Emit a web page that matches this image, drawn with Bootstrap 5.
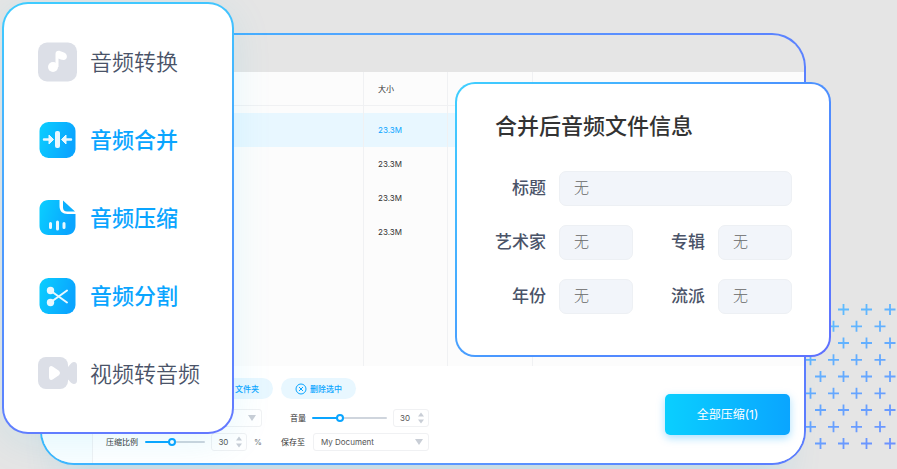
<!DOCTYPE html>
<html lang="zh-CN">
<head>
<meta charset="utf-8">
<meta name="viewport" content="width=device-width, initial-scale=1">
<title>音频压缩</title>
<link href="https://cdn.jsdelivr.net/npm/bootstrap@5.3.0/dist/css/bootstrap.min.css" rel="stylesheet">
<style>
  :root { --accent: #0aa5ff; --ink: #4a5368; --line: #f0f1f3; --page: #e5e5e5; }
  body { background: var(--page); font-family: Inter, "Noto Sans CJK SC", sans-serif; color: #333; }
  .scene { min-height: 100vh; padding: 33px 91px 4px 40px; overflow: hidden; }
  .outlined { border: 2px solid transparent; }

  .pluses { right: 0; bottom: 18px; width: 98px; height: 148px; }

  .app-window { border-radius: 34px; overflow: hidden;
    background: linear-gradient(var(--page), var(--page)) padding-box, linear-gradient(100deg, #35c0ff, #5a9bff 50%, #5b7cff) border-box; }
  .app-glow { box-shadow: 0 40px 40px -24px rgba(0, 170, 230, .16); }
  .title-bar { height: 37px; }
  .side-rail { width: 51px; border-right: 1px solid var(--line); background: #fafeff; }

  .files { background: #fcfcfc; font-size: 8px; line-height: 12px; table-layout: fixed; border-collapse: separate; border-spacing: 0; }
  .files th, .files td { height: 34px; padding: 0 14px; font-weight: 400; border-right: 1px solid var(--line); }
  .files td { padding-bottom: 1px; }
  .files th { border-bottom: 1px solid var(--line); }
  .files th:last-child, .files td:last-child { border-right: 0; }
  .files .spacer td { height: 7px; }
  .files .rest td { height: auto; }
  .files .chosen td { background: #e8f7ff; color: var(--accent); }
  .c-name { width: 271px; } .c-size { width: 84px; } .c-time { width: 85px; }

  .tool-bar { background: #fff; padding: 12px 14px 12px 13px; font-size: 8px; line-height: 12px; }
  .col-a { width: 167px; } .col-b { width: 148px; }
  .inset-end { padding-right: 11px; }
  .line-one { margin: 10px 0 6px; }
  .pill { height: 21px; gap: 3px; padding: 0 14px; border: 0; border-radius: 11px; background: #e8f7ff; color: var(--accent); font-weight: 500; }
  .lab { color: #333; white-space: nowrap; }
  .field-box { height: 18px; border: 1px solid var(--line); border-radius: 3px; background: transparent; color: #555; font-size: 8px; line-height: 12px; }
  .num { width: 36px; }
  .num input { width: 24px; padding: 0 0 0 6px; border: 0; background: transparent; color: #555; appearance: textfield; -moz-appearance: textfield; }
  .num input::-webkit-inner-spin-button { display: none; }
  .pick { appearance: none; padding: 0 20px 0 7px; width: 100%; }
  .pick-wrap svg { right: 6px; top: 6px; }
  .slide { appearance: none; height: 8px; margin: 0; background: transparent; min-width: 0; }
  .slide-vol { margin: 0 6px; }
  .slide::-webkit-slider-runnable-track { height: 2px; border-radius: 1px; background: linear-gradient(90deg, var(--accent) var(--at), #cfd5dd var(--at)); }
  .slide::-webkit-slider-thumb { appearance: none; width: 8px; height: 8px; margin-top: -3px; border: 2px solid var(--accent); border-radius: 50%; background: #fff; }
  .go { height: 41px; width: 125px; border: 0; border-radius: 5px; font-size: 12px; color: #fff; margin-top: 16px;
    background: linear-gradient(90deg, #0acfff, #0aa5ff); box-shadow: 0 3px 8px rgba(10, 165, 255, .35); }

  .menu-card { left: 2px; top: 2px; width: 232px; padding: 36px 34px; border-radius: 26px;
    background: linear-gradient(#fff, #fff) padding-box, linear-gradient(170deg, #3fcdff, #4a9cff 50%, #6478ff) border-box;
    box-shadow: 0 8px 40px rgba(0, 190, 240, .1); }
  .menu-list { gap: 34px; }
  .menu-link { height: 44px; gap: 12px; font-size: 22px; line-height: 32px; color: var(--ink); text-decoration: none; white-space: nowrap; font-weight: 350; }
  .menu-link.on { color: var(--accent); font-weight: 500; }
  .menu-link svg { width: 40px; height: 44px; flex: none; }

  .info-card { right: 66px; top: 82px; width: 376px; padding: 26px 37px 41px 38px; border-radius: 20px;
    background: linear-gradient(#fff, #fff) padding-box, linear-gradient(135deg, #3fd0ff, #4a96ff 50%, #6070ff) border-box; }
  .info-card h1 { font-size: 22px; line-height: 32px; font-weight: 500; margin: 0 0 29px; }
  .info-grid { display: grid; grid-template-columns: 51px 1fr 59px 1fr; column-gap: 13px; row-gap: 19px; }
  .info-grid label { font-size: 17px; line-height: 35px; font-weight: 500; color: var(--ink); text-align: right; white-space: nowrap; }
  .info-grid input { height: 35px; min-width: 0; padding: 0 14px 2px; border: 1px solid #edf0f4; border-radius: 7px; background: #f2f5fa; font-size: 15px; font-weight: 300; }
  .info-grid input::placeholder { color: #666; opacity: 1; }
  .wide { grid-column: 2 / -1; }
</style>
</head>
<body>
<div class="scene position-relative d-flex">
  <svg class="pluses position-absolute" viewBox="0 0 98 148" aria-hidden="true">
    <defs>
      <linearGradient id="pg" gradientUnits="userSpaceOnUse" x1="0" y1="0" x2="98" y2="148"><stop stop-color="#5cc4ff"/><stop offset="1" stop-color="#6d8fff"/></linearGradient>
    </defs>
    <path fill="none" stroke="url(#pg)" stroke-width="1.800" d="
      M39 6.500h11m-5.500-5.500v11M62 6.500h11m-5.500-5.500v11M85.500 6.500h11m-5.500-5.500v11
      M29 23.300h11m-5.500-5.500v11M52 23.300h11m-5.500-5.500v11M75.500 23.300h11m-5.500-5.500v11
      M39 40h11m-5.500-5.500v11M62 40h11m-5.500-5.500v11M85.500 40h11m-5.500-5.500v11
      M6 56.800h11m-5.500-5.500v11M29 56.800h11m-5.500-5.500v11M52 56.800h11m-5.500-5.500v11M75.500 56.800h11m-5.500-5.500v11
      M16 73.500h11m-5.500-5.500v11M39 73.500h11m-5.500-5.500v11M62 73.500h11m-5.500-5.500v11M85.500 73.500h11m-5.500-5.500v11
      M6 90.300h11m-5.500-5.500v11M29 90.300h11m-5.500-5.500v11M52 90.300h11m-5.500-5.500v11M75.500 90.300h11m-5.500-5.500v11
      M16 107h11m-5.500-5.500v11M39 107h11m-5.500-5.500v11M62 107h11m-5.500-5.500v11M85.500 107h11m-5.500-5.500v11
      M6 123.800h11m-5.500-5.500v11M29 123.800h11m-5.500-5.500v11M52 123.800h11m-5.500-5.500v11M75.500 123.800h11m-5.500-5.500v11
      M16 140.500h11m-5.500-5.500v11M39 140.500h11m-5.500-5.500v11M62 140.500h11m-5.500-5.500v11M85.500 140.500h11m-5.500-5.500v11"/>
  </svg>

  <main class="app-window app-glow outlined position-relative flex-fill d-flex flex-column">
    <div class="title-bar"></div>
    <div class="d-flex flex-fill">
      <div class="side-rail flex-shrink-0"></div>
      <div class="flex-fill d-flex flex-column">
        <div class="flex-fill d-flex">
        <table class="files w-100">
          <colgroup><col class="c-name"><col class="c-size"><col class="c-time"><col></colgroup>
          <thead><tr><th></th><th scope="col">大小</th><th></th><th></th></tr></thead>
          <tbody>
            <tr class="spacer"><td></td><td></td><td></td><td></td></tr>
            <tr class="chosen"><td></td><td>23.3M</td><td></td><td></td></tr>
            <tr><td></td><td>23.3M</td><td></td><td></td></tr>
            <tr><td></td><td>23.3M</td><td></td><td></td></tr>
            <tr><td></td><td>23.3M</td><td></td><td></td></tr>
            <tr class="rest"><td></td><td></td><td></td><td></td></tr>
          </tbody>
        </table>
        </div>
        <div class="tool-bar d-flex justify-content-between align-items-start">
          <div class="d-flex gap-2">
            <div class="col-a d-flex flex-column">
              <button type="button" class="pill align-self-end d-flex align-items-center">
                <svg width="12" height="12" viewBox="0 0 12 12" fill="none" stroke="#0aa5ff" aria-hidden="true"><circle cx="6" cy="6" r="5"/><path d="M6 3.500v5M3.500 6h5"/></svg>文件夹
              </button>
              <div class="line-one inset-end d-flex justify-content-end">
                <div class="pick-wrap position-relative d-flex w-50">
                  <select class="field-box pick" aria-label="格式"><option></option></select>
                  <svg class="position-absolute" width="8" height="6" viewBox="0 0 8 6" aria-hidden="true"><path fill="#c9ced6" d="M0 0h8L4 6z"/></svg>
                </div>
              </div>
              <div class="inset-end d-flex align-items-center justify-content-between">
                <label class="lab" for="ratio">压缩比例</label>
                <input id="ratio" class="slide" type="range" value="45" style="width:60px;--at:45%">
                <span class="field-box num d-flex align-items-center">
                  <input type="number" value="30" aria-label="压缩比例数值">
                  <svg width="6" height="12" viewBox="0 0 6 12" aria-hidden="true"><path fill="#c9ced6" d="M0 4.500 3 .5l3 4zM0 7.500h6l-3 4z"/></svg>
                </span>
                <span class="text-secondary">%</span>
              </div>
            </div>
            <div class="col-b d-flex flex-column">
              <button type="button" class="pill align-self-start d-flex align-items-center">
                <svg width="12" height="12" viewBox="0 0 12 12" fill="none" stroke="#0aa5ff" aria-hidden="true"><circle cx="6" cy="6" r="5"/><path d="m4 4 4 4m0-4-4 4"/></svg>删除选中
              </button>
              <div class="line-one d-flex align-items-center justify-content-end">
                <label class="lab" for="vol">音量</label>
                <input id="vol" class="slide slide-vol" type="range" value="36" style="width:75px;--at:36%">
                <span class="field-box num d-flex align-items-center">
                  <input type="number" value="30" aria-label="音量数值">
                  <svg width="6" height="12" viewBox="0 0 6 12" aria-hidden="true"><path fill="#c9ced6" d="M0 4.500 3 .5l3 4zM0 7.500h6l-3 4z"/></svg>
                </span>
              </div>
              <div class="d-flex align-items-center gap-2">
                <label class="lab" for="dest">保存至</label>
                <div class="pick-wrap position-relative d-flex flex-fill">
                  <select id="dest" class="field-box pick"><option>My Document</option></select>
                  <svg class="position-absolute" width="8" height="6" viewBox="0 0 8 6" aria-hidden="true"><path fill="#c9ced6" d="M0 0h8L4 6z"/></svg>
                </div>
              </div>
            </div>
          </div>
          <button type="button" class="go">全部压缩(1)</button>
        </div>
      </div>
    </div>
  </main>

  <nav class="menu-card outlined position-absolute" aria-label="功能">
    <ul class="menu-list list-unstyled d-flex flex-column m-0">
      <li><a href="#" class="menu-link d-flex align-items-center">
        <svg viewBox="0 0 40 44" aria-hidden="true"><rect y="2.500" width="39" height="39" rx="9" fill="#dcdfe7"/><circle cx="15" cy="27" r="5" fill="#fff"/><path fill="#fff" d="M17.500 27V14c0-3 2.500-4 5-2.800l3.500 1.300c4 1.500 4 7.500-.5 7.500-2 0-3.500-.8-5-1.500V27z"/></svg>音频转换</a></li>
      <li><a href="#" class="menu-link on d-flex align-items-center">
        <svg viewBox="0 0 40 44" aria-hidden="true"><defs><linearGradient id="bg" x1="0" y1="0" x2="1" y2=".3"><stop stop-color="#0acfff"/><stop offset="1" stop-color="#0aa5ff"/></linearGradient></defs><rect x="1.500" y="4" width="36" height="36" rx="9" fill="url(#bg)"/><rect x="17" y="13" width="5" height="17" rx="2" fill="#e9f8ff"/><path d="M6 21.500h6M27 21.500h6" stroke="#e9f8ff" stroke-width="2.500" stroke-linecap="round"/><path fill="#e9f8ff" stroke="#e9f8ff" stroke-linejoin="round" d="m11 17 4.500 4.500L11 26zM28 17l-4.500 4.500L28 26z"/></svg>音频合并</a></li>
      <li><a href="#" class="menu-link on d-flex align-items-center">
        <svg viewBox="0 0 40 44" aria-hidden="true"><path fill="url(#bg)" d="M10.500 4H21.500v6c0 5 3 8 8 8h8v12c0 5-3.500 9-9 9H10.500c-5.500 0-9-4-9-9V13c0-5 3.500-9 9-9z"/><path fill="#0ab0ff" d="M25 4.500 37 15.500H29c-2.500 0-4-1.500-4-4z"/><path d="M12.500 27.500v4M19.500 26v7M26 27.500v4" stroke="#e9f8ff" stroke-width="3" stroke-linecap="round"/></svg>音频压缩</a></li>
      <li><a href="#" class="menu-link on d-flex align-items-center">
        <svg viewBox="0 0 40 44" aria-hidden="true"><rect x="1.500" y="4" width="36" height="36" rx="9" fill="url(#bg)"/><circle cx="12.500" cy="16.500" r="3.700" fill="#e9f8ff"/><circle cx="12.500" cy="28.500" r="3.700" fill="#e9f8ff"/><path d="M13 17 29 28.500M13 28 29 16.500" stroke="#e9f8ff" stroke-width="2" stroke-linecap="round"/></svg>音频分割</a></li>
      <li><a href="#" class="menu-link d-flex align-items-center">
        <svg viewBox="0 0 40 44" aria-hidden="true"><rect y="5" width="30" height="32" rx="8" fill="#dcdfe7"/><path fill="#dcdfe7" d="M29 15.500c1.500 0 4-5.500 7-5.500 2 0 3 1.500 3 3.500v15c0 2-1 3.500-3 3.500-3 0-5.500-5-7-5z"/><path fill="#fff" d="M11 17c0-3 2-3.500 4-2.300l5.500 3.800c2 1.500 2 3.500 0 5L15 27.300c-2 1.200-4 .7-4-2.300z"/></svg>视频转音频</a></li>
    </ul>
  </nav>

  <form class="info-card outlined position-absolute">
    <h1>合并后音频文件信息</h1>
    <div class="info-grid">
      <label for="f-title">标题</label><input id="f-title" class="wide" type="text" placeholder="无">
      <label for="f-artist">艺术家</label><input id="f-artist" type="text" placeholder="无">
      <label for="f-album">专辑</label><input id="f-album" type="text" placeholder="无">
      <label for="f-year">年份</label><input id="f-year" type="text" placeholder="无">
      <label for="f-genre">流派</label><input id="f-genre" type="text" placeholder="无">
    </div>
  </form>
</div>
<script src="https://cdn.jsdelivr.net/npm/bootstrap@5.3.0/dist/js/bootstrap.bundle.min.js"></script>
</body>
</html>
